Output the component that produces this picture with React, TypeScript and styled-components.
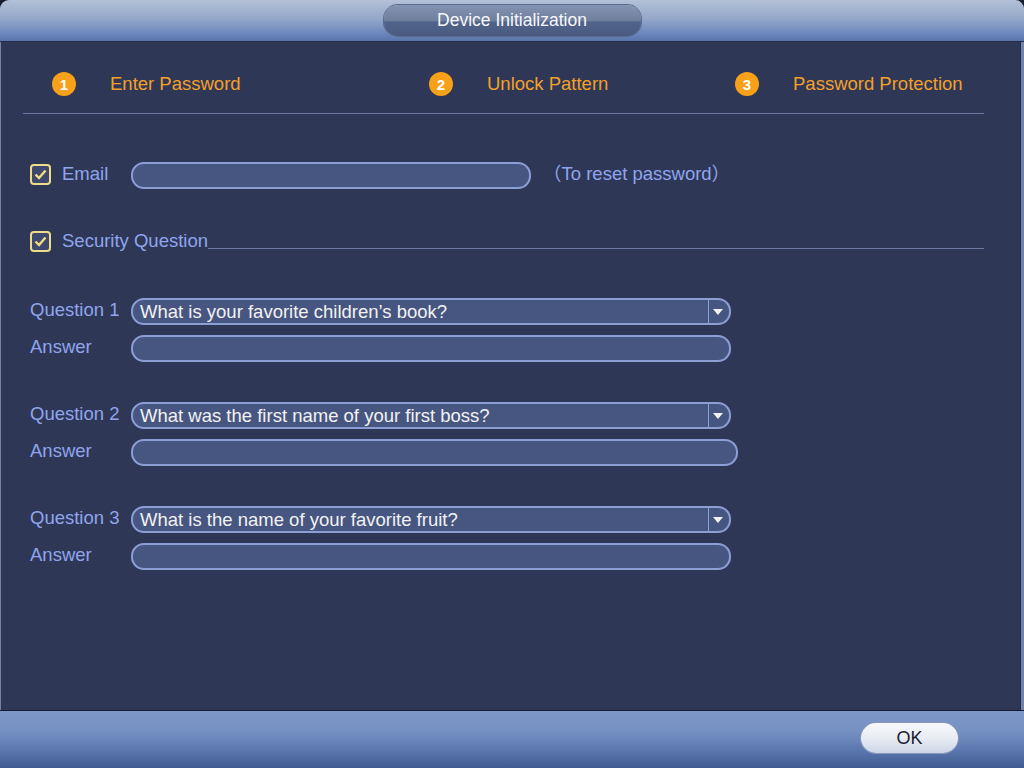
import styled, { createGlobalStyle } from "styled-components";

const GlobalStyle = createGlobalStyle`
  html, body {
    margin: 0;
    padding: 0;
    background: #1a1f30;
  }
  body {
    font-family: "Liberation Sans", Arial, sans-serif;
  }
`;

const steps = ["Enter Password", "Unlock Pattern", "Password Protection"];

const questions = [
  { label: "Question 1", text: "What is your favorite children’s book?", answerWide: false },
  { label: "Question 2", text: "What was the first name of your first boss?", answerWide: true },
  { label: "Question 3", text: "What is the name of your favorite fruit?", answerWide: false },
];

const CheckIcon = () => (
  <svg width="13" height="11" viewBox="0 0 13 11">
    <path d="M1.5 5.5 L5 9 L11.5 1.5" fill="none" stroke="#f0dc7a" strokeWidth="2.4" />
  </svg>
);

const Arrow = () => (
  <svg width="10" height="6" viewBox="0 0 10 6">
    <path d="M0 0 L10 0 L5 6 Z" fill="#f2f2f2" />
  </svg>
);

export default function App() {
  return (
    <>
      <GlobalStyle />
      <Window>
        <Header>
          <TitlePill>Device Initialization</TitlePill>
        </Header>
        <Body>
          <StepRow>
            {steps.map((s, i) => (
              <Step key={s}>
                <StepNum>{i + 1}</StepNum>
                <StepLabel>{s}</StepLabel>
              </Step>
            ))}
          </StepRow>
          <Divider />
          <Form>
            <EmailRow>
              <CheckLabel $width={101}>
                <CheckBox>
                  <CheckIcon />
                </CheckBox>
                <Label>Email</Label>
              </CheckLabel>
              <Input $width={400} />
              <Hint>（To reset password）</Hint>
            </EmailRow>
            <SectionRow>
              <CheckLabel>
                <CheckBox>
                  <CheckIcon />
                </CheckBox>
                <Label>Security Question</Label>
              </CheckLabel>
              <SectionLine />
            </SectionRow>
            {questions.map((q, i) => (
              <QuestionGroup key={q.label} $first={i === 0}>
                <FieldRow>
                  <FieldLabel>{q.label}</FieldLabel>
                  <Select>
                    <SelectText>{q.text}</SelectText>
                    <SelectButton>
                      <Arrow />
                    </SelectButton>
                  </Select>
                </FieldRow>
                <FieldRow $gap={10}>
                  <FieldLabel>Answer</FieldLabel>
                  <Input $width={q.answerWide ? 607 : 600} />
                </FieldRow>
              </QuestionGroup>
            ))}
          </Form>
        </Body>
        <Footer>
          <OkButton>OK</OkButton>
        </Footer>
      </Window>
    </>
  );
}

const Window = styled.div`
  width: 1024px;
  height: 768px;
  display: flex;
  flex-direction: column;
  box-sizing: border-box;
  border-radius: 9px 9px 0 0;
  overflow: hidden;
  background: #2e3755;
`;

const Header = styled.div`
  height: 42px;
  flex-shrink: 0;
  display: flex;
  justify-content: center;
  align-items: flex-start;
  padding-top: 5px;
  box-sizing: border-box;
  background: linear-gradient(#b3c0d8 0%, #95a8c8 45%, #6d89be 80%, #5874aa 100%);
  border-bottom: 1px solid #252c44;
`;

const TitlePill = styled.div`
  width: 257px;
  height: 31px;
  border-radius: 14px;
  display: flex;
  align-items: center;
  justify-content: center;
  color: #f7f8fb;
  font-size: 17.5px;
  background: linear-gradient(#8593b2 0%, #6f7f9c 50%, #52638a 55%, #4a5b80 100%);
  box-shadow: 0 0 0 1px #5a6b90;
`;

const Body = styled.div`
  flex: 1;
  display: flex;
  flex-direction: column;
  padding: 0 37px 0 22px;
  border-left: 1px solid #7382a8;
  border-right: 3px solid #7382a8;
  box-shadow: inset -1px 0 0 #252c44;
`;

const StepRow = styled.div`
  display: grid;
  grid-template-columns: 377px 306px 1fr;
  padding-left: 29px;
  margin-top: 30px;
  height: 24px;
`;

const Step = styled.div`
  display: flex;
  align-items: center;
`;

const StepNum = styled.div`
  width: 24px;
  height: 24px;
  border-radius: 50%;
  background: #f7a01a;
  color: #fff;
  font-size: 15px;
  font-weight: bold;
  display: flex;
  align-items: center;
  justify-content: center;
`;

const StepLabel = styled.div`
  margin-left: 34px;
  color: #f4a028;
  font-size: 18.5px;
`;

const Divider = styled.div`
  height: 1px;
  margin-top: 17px;
  background: #6d7aa6;
`;

const Form = styled.div`
  display: flex;
  flex-direction: column;
  padding-left: 7px;
`;

const EmailRow = styled.div`
  display: flex;
  align-items: center;
  margin-top: 48px;
  height: 27px;
`;

const CheckLabel = styled.div<{ $width?: number }>`
  display: flex;
  align-items: center;
  width: ${(p) => (p.$width ? `${p.$width}px` : "auto")};
  flex-shrink: 0;
  margin-top: -3px;
`;

const CheckBox = styled.div`
  width: 17px;
  height: 17px;
  border: 2px solid #efdc86;
  border-radius: 4px;
  background: #3d4870;
  display: flex;
  align-items: center;
  justify-content: center;
`;

const Label = styled.span`
  margin-left: 11px;
  color: #90a5ee;
  font-size: 18.5px;
`;

const Input = styled.div<{ $width: number }>`
  width: ${(p) => p.$width}px;
  height: 27px;
  box-sizing: border-box;
  border: 2px solid #8c9ed6;
  border-radius: 13px;
  background: #475680;
`;

const Hint = styled.span`
  margin-left: 12px;
  margin-top: -3px;
  line-height: 1;
  color: #90a5ee;
  font-size: 18.5px;
  font-family: "Liberation Sans", "Noto Sans CJK SC", sans-serif;
`;

const SectionRow = styled.div`
  display: flex;
  align-items: flex-end;
  margin-top: 42px;
  height: 21px;
`;

const SectionLine = styled.div`
  flex: 1;
  height: 1px;
  margin-bottom: 3px;
  background: #6d7aa6;
`;

const QuestionGroup = styled.div<{ $first: boolean }>`
  display: flex;
  flex-direction: column;
  margin-top: ${(p) => (p.$first ? 46 : 40)}px;
`;

const FieldRow = styled.div<{ $gap?: number }>`
  display: flex;
  align-items: center;
  margin-top: ${(p) => p.$gap ?? 0}px;
`;

const FieldLabel = styled.div`
  width: 101px;
  color: #90a5ee;
  font-size: 18.5px;
  margin-top: -3px;
`;

const Select = styled.div`
  width: 600px;
  height: 27px;
  box-sizing: border-box;
  border: 2px solid #8c9ed6;
  border-radius: 13px;
  background: #475680;
  display: flex;
  align-items: center;
  overflow: hidden;
`;

const SelectText = styled.div`
  flex: 1;
  padding-left: 7px;
  color: #f2f2f2;
  font-size: 18.5px;
`;

const SelectButton = styled.div`
  width: 18px;
  height: 100%;
  border-left: 1px solid #8c9ed6;
  display: flex;
  align-items: center;
  justify-content: center;
  padding-right: 2px;
`;

const Footer = styled.div`
  height: 58px;
  flex-shrink: 0;
  display: flex;
  align-items: flex-start;
  justify-content: flex-end;
  padding: 12px 66px 0 0;
  box-sizing: border-box;
  border-top: 1px solid #151a2a;
  background: linear-gradient(#7d98c8 0%, #7590c2 35%, #5a76ae 70%, #3f5a90 100%);
`;

const OkButton = styled.div`
  width: 97px;
  height: 30px;
  border-radius: 15px;
  display: flex;
  align-items: center;
  justify-content: center;
  font-size: 18px;
  color: #1c2030;
  background: linear-gradient(#f6f8fb 0%, #e8ecf3 50%, #cdd6e6 100%);
  box-shadow: 0 0 0 1px #8797bd;
`;
